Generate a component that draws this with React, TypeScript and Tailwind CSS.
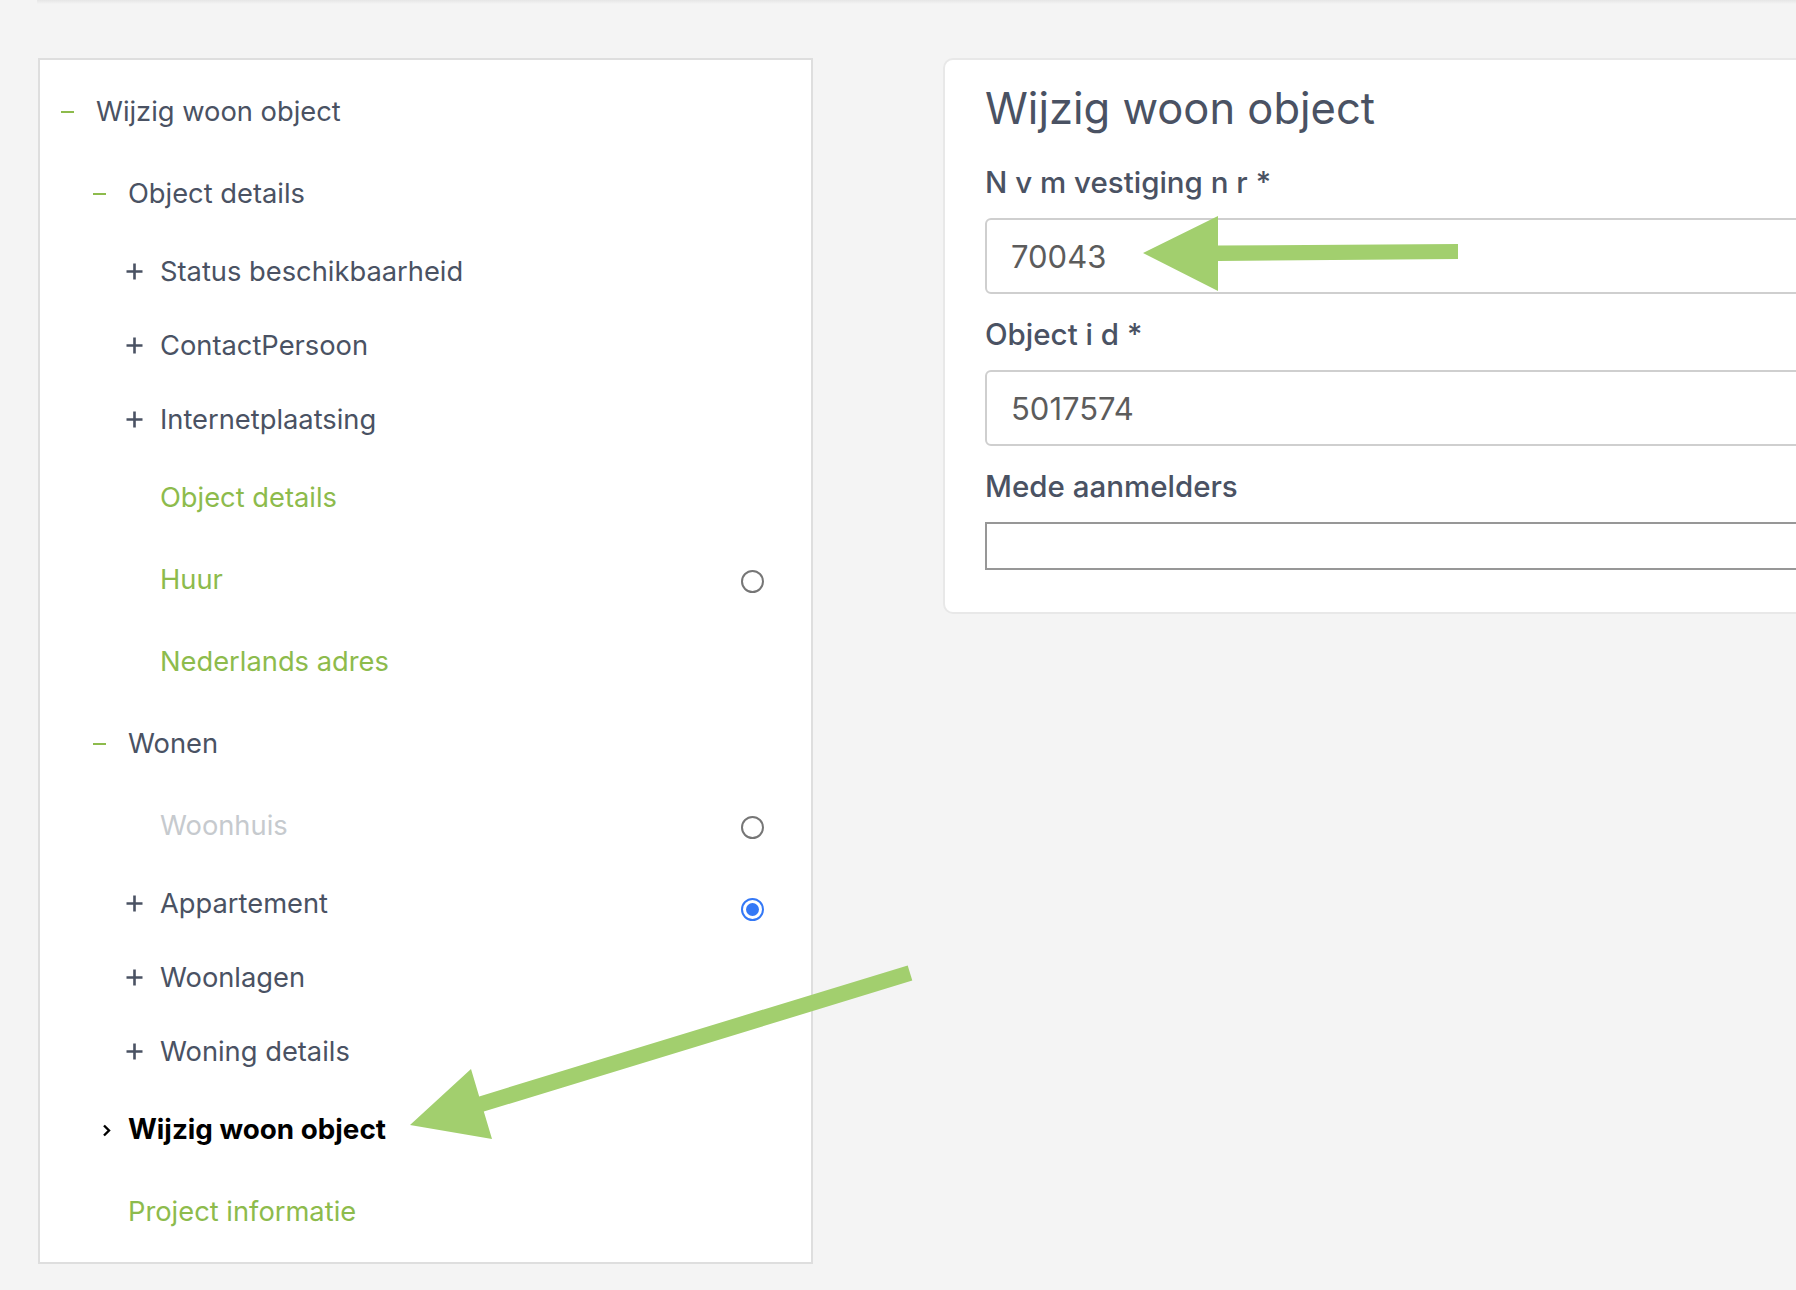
import React from 'react';

type Tone = 'dark' | 'green' | 'muted' | 'active';
type Icon = 'minus' | 'plus' | 'chevron' | null;

interface TreeNode {
  label: string;
  level: 0 | 1 | 2;
  icon: Icon;
  tone: Tone;
  radio?: 'off' | 'on';
}

const tree: TreeNode[] = [
  { label: 'Wijzig woon object', level: 0, icon: 'minus', tone: 'dark' },
  { label: 'Object details', level: 1, icon: 'minus', tone: 'dark' },
  { label: 'Status beschikbaarheid', level: 2, icon: 'plus', tone: 'dark' },
  { label: 'ContactPersoon', level: 2, icon: 'plus', tone: 'dark' },
  { label: 'Internetplaatsing', level: 2, icon: 'plus', tone: 'dark' },
  { label: 'Object details', level: 2, icon: null, tone: 'green' },
  { label: 'Huur', level: 2, icon: null, tone: 'green', radio: 'off' },
  { label: 'Nederlands adres', level: 2, icon: null, tone: 'green' },
  { label: 'Wonen', level: 1, icon: 'minus', tone: 'dark' },
  { label: 'Woonhuis', level: 2, icon: null, tone: 'muted', radio: 'off' },
  { label: 'Appartement', level: 2, icon: 'plus', tone: 'dark', radio: 'on' },
  { label: 'Woonlagen', level: 2, icon: 'plus', tone: 'dark' },
  { label: 'Woning details', level: 2, icon: 'plus', tone: 'dark' },
  { label: 'Wijzig woon object', level: 1, icon: 'chevron', tone: 'active' },
  { label: 'Project informatie', level: 1, icon: null, tone: 'green' },
];

const toneClass: Record<Tone, string> = {
  dark: 'text-[#4a5263] text-[27.3px]',
  green: 'text-[#8dbb4c] text-[27.3px]',
  muted: 'text-[#c6cace] text-[27.3px]',
  active: 'text-black font-bold text-[27.8px]',
};

const levelPad = ['pl-[20px]', 'pl-[52px]', 'pl-[84px]'];

function TreeIcon({ icon }: { icon: Icon }) {
  if (icon === 'minus') return <div className="ml-[1px] h-[2px] w-[13px] bg-[#8dbb4c]" />;
  if (icon === 'plus')
    return (
      <svg width="17" height="17" viewBox="0 0 17 17" className="ml-[2px] -mt-[2px]">
        <path d="M8.5 0.5v16M0.5 8.5h16" stroke="#4a5263" strokeWidth="2.6" />
      </svg>
    );
  if (icon === 'chevron')
    return (
      <svg width="10" height="13" viewBox="0 0 10 13" className="ml-[10px]">
        <path d="M2 1.5l5 5-5 5" fill="none" stroke="#000" strokeWidth="2.4" />
      </svg>
    );
  return null;
}

function Radio({ on }: { on: boolean }) {
  if (on)
    return (
      <div className="relative top-[5px] flex h-[23px] w-[23px] items-center justify-center rounded-full border-2 border-[#3478f6] bg-white">
        <div className="h-[13px] w-[13px] rounded-full bg-[#3478f6]" />
      </div>
    );
  return <div className="relative top-[1px] h-[23px] w-[23px] rounded-full border-2 border-[#767676] bg-white" />;
}

function TreeRow({ node }: { node: TreeNode }) {
  return (
    <div
      className={`flex items-center pr-[47px] ${levelPad[node.level]} ${
        node.icon === 'plus' ? 'h-[74px]' : 'h-[82px]'
      }`}
    >
      <div className="flex w-[36px] shrink-0 items-center">
        <TreeIcon icon={node.icon} />
      </div>
      <span className={`leading-none ${toneClass[node.tone]}`}>{node.label}</span>
      {node.radio && (
        <div className="ml-auto">
          <Radio on={node.radio === 'on'} />
        </div>
      )}
    </div>
  );
}

function Field({ label, value }: { label: string; value: string }) {
  return (
    <div className="mb-[23px]">
      <div className="mb-[19px] text-[29.5px] font-medium leading-[34px] text-[#4a5263]">{label}</div>
      <input
        readOnly
        value={value}
        className="h-[76px] w-full rounded-[6px] border-2 border-[#cfcfcf] bg-white pl-[24px] text-[31px] text-[#5c5c5c] outline-none"
      />
    </div>
  );
}

export default function App() {
  return (
    <div className="relative h-[1290px] w-full overflow-hidden bg-[#f4f4f4] font-[Inter,sans-serif]">
      <div className="ml-[37px] h-[4px] bg-linear-to-b from-[#e6e6e6] to-[#f4f4f4]" />

      <div className="mt-[54px] flex items-start pl-[38px]">
        {/* tree */}
        <div className="w-[775px] shrink-0 border-2 border-[#dedede] bg-white pb-[9px] pt-[11px]">
          {tree.map((node, i) => (
            <TreeRow key={i} node={node} />
          ))}
        </div>

        {/* form */}
        <div className="ml-[130px] w-[1000px] shrink-0 rounded-[10px] border-2 border-[#e8e8e8] bg-white px-[40px] pb-[42px] pt-[24px]">
          <h1 className="mb-[33px] text-[43.5px] font-normal leading-[48px] text-[#4a5263]">Wijzig woon object</h1>
          <Field label="N v m vestiging n r *" value="70043" />
          <Field label="Object i d *" value="5017574" />
          <div>
            <div className="mb-[19px] text-[29.5px] font-medium leading-[34px] text-[#4a5263]">Mede aanmelders</div>
            <div className="h-[48px] w-full border-2 border-[#979797] bg-white" />
          </div>
        </div>
      </div>

      {/* annotation arrows */}
      <svg
        className="pointer-events-none absolute inset-0"
        width="1796"
        height="1290"
        viewBox="0 0 1796 1290"
      >
        <polygon
          points="1143,253 1218,216 1218,245.5 1458,244 1458,259 1218,261 1218,291"
          fill="#a2cf6e"
        />
        <polygon
          points="410,1125 471,1069 479.2,1096.4 907.7,965.4 912.3,980.6 483.8,1111.6 492,1139"
          fill="#a2cf6e"
        />
      </svg>
    </div>
  );
}
